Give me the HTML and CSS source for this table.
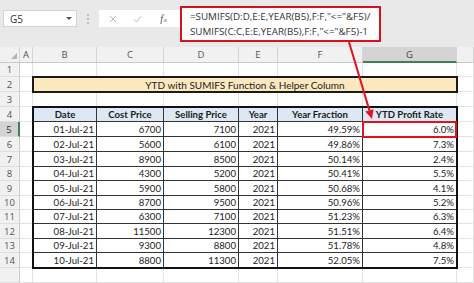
FILE: index.html
```html
<!DOCTYPE html>
<html>
<head>
<meta charset="utf-8">
<link rel="stylesheet" href="styles.css">
</head>
<body>
<div class="app">
  <div class="toolbar">
    <div class="namebox"><span>G5</span><span class="dd"></span></div>
    <div class="sep"><i></i><i></i><i></i></div>
    <div class="fxbtns">
      <span class="slot"><svg width="8" height="8" viewBox="0 0 8 8"><path d="M1 1L7 7M7 1L1 7" stroke="#b9b9b9" stroke-width="1" fill="none"/></svg></span>
      <span class="slot"><svg width="9" height="8" viewBox="0 0 9 8"><path d="M1 4.5L3.5 7L8 1.5" stroke="#b9b9b9" stroke-width="1" fill="none"/></svg></span>
      <span class="slot fx"><i>f</i><small>x</small></span>
    </div>
    <div class="formula">=SUMIFS(D:D,E:E,YEAR(B5),F:F,"&lt;="&amp;F5)/<br>SUMIFS(C:C,E:E,YEAR(B5),F:F,"&lt;="&amp;F5)-1</div>
  </div>
  <div class="sheet">
    <div class="corner"><svg width="6" height="6" viewBox="0 0 6 6"><path d="M6 0V6H0Z" fill="#b4b4b4"/></svg></div>
    <div class="ch">A</div><div class="ch">B</div><div class="ch">C</div><div class="ch">D</div><div class="ch">E</div><div class="ch">F</div><div class="ch sel">G</div><div class="ch"></div>

    <div class="rh">1</div><div class="c"></div><div class="c"></div><div class="c"></div><div class="c"></div><div class="c"></div><div class="c"></div><div class="c"></div><div class="c"></div>
    <div class="rh">2</div><div class="c"></div><div class="c"></div>
    <div class="rh">3</div><div class="c"></div><div class="c"></div><div class="c"></div><div class="c"></div><div class="c"></div><div class="c"></div><div class="c"></div><div class="c"></div>
    <div class="rh">4</div><div class="c"></div><div class="c"></div>
    <div class="rh sel">5</div><div class="c"></div><div class="c"></div>
    <div class="rh">6</div><div class="c"></div><div class="c"></div>
    <div class="rh">7</div><div class="c"></div><div class="c"></div>
    <div class="rh">8</div><div class="c"></div><div class="c"></div>
    <div class="rh">9</div><div class="c"></div><div class="c"></div>
    <div class="rh">10</div><div class="c"></div><div class="c"></div>
    <div class="rh">11</div><div class="c"></div><div class="c"></div>
    <div class="rh">12</div><div class="c"></div><div class="c"></div>
    <div class="rh">13</div><div class="c"></div><div class="c"></div>
    <div class="rh">14</div><div class="c"></div><div class="c"></div>
    <div class="rh"></div><div class="c"></div><div class="c"></div><div class="c"></div><div class="c"></div><div class="c"></div><div class="c"></div><div class="c"></div><div class="c"></div>

    <div class="title">YTD with SUMIFS Function &amp; Helper Column</div>
    <div class="tbl">
      <div class="th">Date</div><div class="th">Cost Price</div><div class="th">Selling Price</div><div class="th">Year</div><div class="th">Year Fraction</div><div class="th">YTD Profit Rate</div>
      <div>01-Jul-21</div><div>6700</div><div>7100</div><div>2021</div><div>49.59%</div><div class="hl">6.0%</div>
      <div>02-Jul-21</div><div>5600</div><div>6100</div><div>2021</div><div>49.86%</div><div>7.3%</div>
      <div>03-Jul-21</div><div>8900</div><div>8500</div><div>2021</div><div>50.14%</div><div>2.4%</div>
      <div>04-Jul-21</div><div>4300</div><div>5200</div><div>2021</div><div>50.41%</div><div>5.5%</div>
      <div>05-Jul-21</div><div>5900</div><div>5800</div><div>2021</div><div>50.68%</div><div>4.1%</div>
      <div>06-Jul-21</div><div>8700</div><div>9500</div><div>2021</div><div>50.96%</div><div>5.2%</div>
      <div>07-Jul-21</div><div>6300</div><div>7100</div><div>2021</div><div>51.23%</div><div>6.3%</div>
      <div>08-Jul-21</div><div>11500</div><div>12300</div><div>2021</div><div>51.51%</div><div>6.4%</div>
      <div>09-Jul-21</div><div>9300</div><div>8800</div><div>2021</div><div>51.78%</div><div>4.8%</div>
      <div>10-Jul-21</div><div>8800</div><div>11300</div><div>2021</div><div>52.05%</div><div>7.5%</div>
    </div>
  </div>
  <svg class="arrow" width="474" height="283" viewBox="0 0 474 283">
    <line x1="349" y1="42" x2="369.4" y2="110.4" stroke="#e0141e" stroke-width="2"/>
    <polygon points="372,119 373.6,109.2 365.4,111.6" fill="#e0141e"/>
  </svg>
</div>
</body>
</html>
```
FILE: styles.css
```css
* { box-sizing: border-box; }
html, body { margin: 0; padding: 0; }
body {
  width: 474px;
  height: 283px;
  overflow: hidden;
  background: #fff;
  font-family: Lato, "Liberation Sans", sans-serif;
}
.app { position: relative; width: 474px; height: 283px; overflow: hidden; }

.toolbar {
  height: 47px;
  background: #e9e9e9;
  display: flex;
  align-items: flex-start;
  padding-left: 3px;
  font-family: "Open Sans", "Noto Sans", sans-serif;
}
.namebox {
  margin-top: 10px;
  width: 74px;
  height: 17px;
  background: #fff;
  border: 1px solid #d2d2d2;
  display: flex;
  align-items: center;
  justify-content: space-between;
  padding: 0 4px 0 6px;
  font-size: 10px;
  color: #333;
}
.dd {
  width: 0; height: 0;
  border-left: 3px solid transparent;
  border-right: 3px solid transparent;
  border-top: 3px solid #555;
}
.sep {
  width: 22px;
  height: 17px;
  margin-top: 10px;
  display: flex;
  flex-direction: column;
  align-items: center;
  justify-content: center;
  gap: 2px;
}
.sep i { display: block; width: 2px; height: 2px; background: #b0b0b0; border-radius: 50%; }
.fxbtns {
  margin-top: 10px;
  width: 81px;
  height: 17px;
  background: #fff;
  display: flex;
  align-items: center;
  padding-left: 1px;
}
.slot { width: 25px; display: flex; align-items: center; justify-content: center; }
.fx { font-family: "Liberation Serif", serif; color: #555; font-size: 10.5px; padding-left: 2px; }
.fx small { font-size: 7px; font-style: italic; margin-left: 0.5px; position: relative; top: 1px; }
.formula {
  margin-top: 6px;
  width: 201px;
  height: 36px;
  background: #fff;
  border: 2px solid #d8121c;
  padding: 1px 0 0 8px;
  font-size: 9.8px;
  line-height: 15px;
  color: #333;
  white-space: nowrap;
  overflow: hidden;
}

.sheet {
  display: grid;
  grid-template-columns: 20px 13px 64px 67px 75px 39px 85px 94px 17px;
  grid-template-rows: 16px 14px 15px 15px 15px 15px 15px 15px 14px 15px 14px 14px 15px 14px 15px 15px;
  font-size: 9.6px;
  color: #1c1c1c;
}
.corner {
  background: #f1f1f1;
  border-right: 1px solid #d4d4d4;
  border-bottom: 1px solid #c9c9c9;
  display: flex;
  justify-content: flex-end;
  align-items: flex-end;
  padding: 0 2px 3px 0;
}
.ch {
  background: #f1f1f1;
  border-right: 1px solid #d4d4d4;
  border-bottom: 1px solid #c9c9c9;
  display: flex;
  align-items: center;
  justify-content: center;
  color: #555;
  font-family: "Open Sans", "Noto Sans", sans-serif;
  font-size: 9.5px;
}
.ch.sel { background: #d4d4d4; border-bottom: 2px solid #3f7f55; color: #444; }
.rh {
  background: #f1f1f1;
  border-right: 1px solid #c9c9c9;
  border-bottom: 1px solid #dedede;
  display: flex;
  align-items: center;
  justify-content: center;
  color: #555;
  font-family: "Open Sans", "Noto Sans", sans-serif;
  font-size: 9.5px;
}
.rh.sel { background: #d4d4d4; border-right: 2px solid #3f7f55; color: #333; }
.c { border-right: 1px solid #e2e2e2; border-bottom: 1px solid #e2e2e2; }

.title {
  grid-column: 3 / 9;
  grid-row: 3 / 4;
  background: #fce8bf;
  border: 1px solid #1a1a1a;
  box-shadow: 0 0 0 1px #1a1a1a;
  display: flex;
  align-items: center;
  justify-content: center;
  font-size: 10px;
  color: #1c1c1c;
}
.tbl {
  grid-column: 3 / 9;
  grid-row: 5 / 16;
  border: 1px solid #111;
  box-shadow: 0 0 0 1px #111;
  display: grid;
  grid-template-columns: 63px 67px 75px 39px 85px 93px;
  grid-template-rows: 14px 15px 15px 15px 14px 15px 14px 14px 15px 14px 14px;
}
.tbl > div {
  border-right: 1px solid #333;
  border-bottom: 1px solid #333;
  display: flex;
  align-items: center;
  justify-content: flex-end;
  padding-right: 2px;
  white-space: nowrap;
}
.tbl > div:nth-child(6n) { border-right: 0; }
.tbl > div:nth-last-child(-n+6) { border-bottom: 0; }
.tbl > .th { background: #dde8f4; justify-content: center; font-weight: bold; padding: 0; }
.tbl > .hl { outline: 2px solid #e0121c; outline-offset: -1px; }

.arrow { position: absolute; left: 0; top: 0; pointer-events: none; }
```
